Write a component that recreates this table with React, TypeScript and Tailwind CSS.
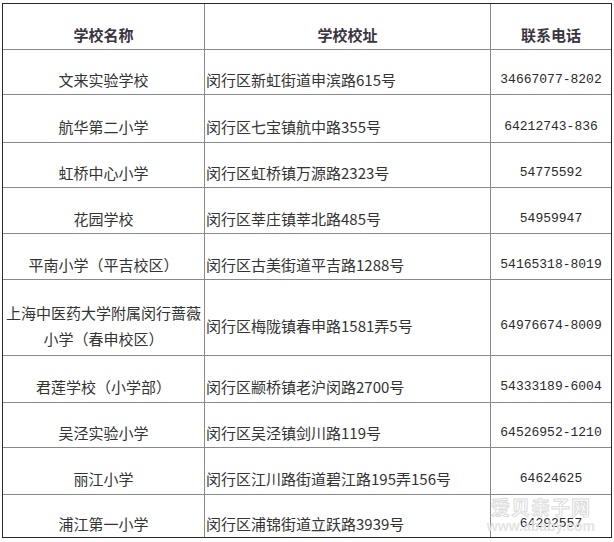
import React from "react";

type Row = { name: React.ReactNode; addr: string; phone: string; h: string };

const rows: Row[] = [
  { name: "文来实验学校", addr: "闵行区新虹街道申滨路615号", phone: "34667077-8202", h: "h-[45px]" },
  { name: "航华第二小学", addr: "闵行区七宝镇航中路355号", phone: "64212743-836", h: "h-[48px]" },
  { name: "虹桥中心小学", addr: "闵行区虹桥镇万源路2323号", phone: "54775592", h: "h-[45px]" },
  { name: "花园学校", addr: "闵行区莘庄镇莘北路485号", phone: "54959947", h: "h-[46px]" },
  { name: "平南小学（平吉校区）", addr: "闵行区古美街道平吉路1288号", phone: "54165318-8019", h: "h-[46px]" },
  {
    name: (
      <>
        上海中医药大学附属闵行蔷薇
        <br />
        小学（春申校区）
      </>
    ),
    addr: "闵行区梅陇镇春申路1581弄5号",
    phone: "64976674-8009",
    h: "h-[76px]",
  },
  { name: "君莲学校（小学部）", addr: "闵行区颛桥镇老沪闵路2700号", phone: "54333189-6004", h: "h-[47px]" },
  { name: "吴泾实验小学", addr: "闵行区吴泾镇剑川路119号", phone: "64526952-1210", h: "h-[45px]" },
  { name: "丽江小学", addr: "闵行区江川路街道碧江路195弄156号", phone: "64624625", h: "h-[47px]" },
  { name: "浦江第一小学", addr: "闵行区浦锦街道立跃路3939号", phone: "64292557", h: "h-[42px]" },
];

const cjk = { fontFamily: '"Noto Sans CJK SC", "Noto Sans", sans-serif' };
const mono = { fontFamily: '"Liberation Mono", "DejaVu Sans Mono", monospace' };

export default function App() {
  return (
    <div className="w-[614px] h-[542px] bg-white overflow-hidden">
      <div
        className="relative ml-[2px] mt-[3px] w-[610px] border border-[#2a2a2a] text-[#333] text-[15px] leading-[26px]"
        style={cjk}
      >
        <div className="flex h-[46px] border-b border-[#8a8a8a] font-bold text-[#3a3440]">
          <div className="w-[202px] border-r border-[#8a8a8a] flex items-center justify-center pt-[16px]">
            学校名称
          </div>
          <div className="w-[286px] border-r border-[#8a8a8a] flex items-center justify-center pt-[16px]">
            学校校址
          </div>
          <div className="w-[120px] flex items-center justify-center pt-[16px]">联系电话</div>
        </div>
        {rows.map((r, i) => (
          <div
            key={i}
            className={`flex ${r.h} ${i < rows.length - 1 ? "border-b border-[#8a8a8a]" : ""}`}
          >
            <div className="w-[202px] border-r border-[#8a8a8a] flex items-center justify-center text-center pt-[16px]">
              <div>{r.name}</div>
            </div>
            <div className="w-[286px] border-r border-[#8a8a8a] flex items-center pt-[16px] pl-[1px] whitespace-nowrap">
              {r.addr}
            </div>
            <div
              className="w-[120px] flex items-center justify-center pt-[16px] text-[13px] text-[#2a2a2a]"
              style={mono}
            >
              {r.phone}
            </div>
          </div>
        ))}
        <div className="absolute right-[16px] bottom-[4px] flex flex-col items-center pointer-events-none select-none">
          <div className="text-[19px] leading-[20px] font-bold tracking-[1px] text-transparent [-webkit-text-stroke:1px_#dcdcdc]">
            爱贝亲子网
          </div>
          <div
            className="text-[14px] leading-[14px] font-bold text-[#e2e2e2] mt-[2px] tracking-[0px]"
            style={{ fontFamily: '"Liberation Sans", sans-serif', opacity: 0.9 }}
          >
            www.ababy.com
          </div>
        </div>
      </div>
    </div>
  );
}
